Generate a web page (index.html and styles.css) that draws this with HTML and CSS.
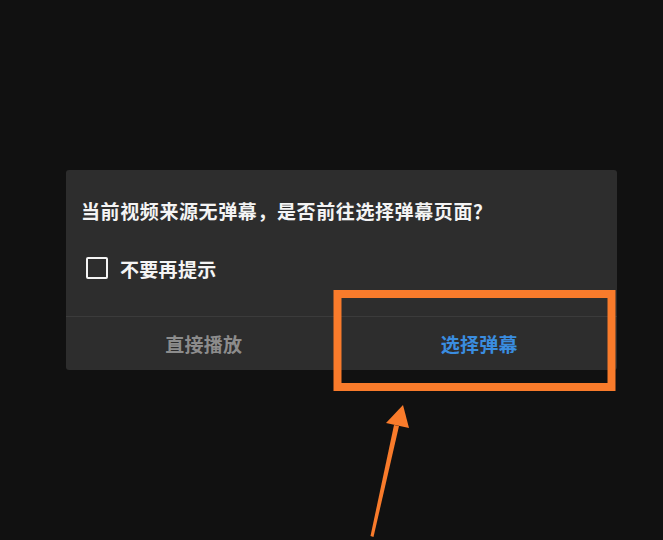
FILE: index.html
```html
<!DOCTYPE html>
<html lang="zh-CN">
<head>
<meta charset="utf-8">
<link rel="stylesheet" href="styles.css">
</head>
<body>
<div class="dialog">
  <div class="body">
    <div class="title">当前视频来源无弹幕，是否前往选择弹幕页面？</div>
    <label class="check-row">
      <span class="box"></span>
      <span class="check-label">不要再提示</span>
    </label>
  </div>
  <div class="footer">
    <div class="btn btn-neutral">直接播放</div>
    <div class="btn btn-primary">选择弹幕</div>
  </div>
</div>
<svg class="annot" width="663" height="540" viewBox="0 0 663 540">
  <rect x="337.5" y="294" width="274" height="93" fill="none" stroke="#f97b2b" stroke-width="8"/>
  <polygon points="370.5,536 373.5,537 399,426 394,425" fill="#f97b2b"/>
  <polygon points="403,405 386,423 409,428" fill="#f97b2b"/>
</svg>
</body>
</html>
```
FILE: styles.css
```css
html, body {
  margin: 0;
  padding: 0;
  background: #111111;
  width: 663px;
  height: 540px;
  overflow: hidden;
  font-family: "Noto Sans CJK SC", "Noto Sans", sans-serif;
}
.dialog {
  margin: 170px 0 0 66px;
  width: 551px;
  height: 200px;
  background: #2d2d2d;
  border-radius: 3px;
  display: flex;
  flex-direction: column;
}
.body {
  flex: 1;
  padding: 28px 15px 0 15px;
  display: flex;
  flex-direction: column;
}
.title {
  color: #f4f4f4;
  font-size: 19px;
  line-height: 26px;
  font-weight: 600;
  letter-spacing: 0.6px;
}
.check-row {
  margin-top: 31px;
  margin-left: 5px;
  display: flex;
  align-items: center;
  gap: 12px;
  height: 26px;
}
.box {
  width: 18px;
  height: 18px;
  border: 2.5px solid #f4f4f4;
  border-radius: 2px;
}
.check-label {
  color: #f4f4f4;
  font-size: 19px;
  line-height: 26px;
  font-weight: 600;
  letter-spacing: 0.3px;
  margin-top: 2px;
}
.footer {
  height: 53px;
  border-top: 1px solid #3b3b3b;
  display: flex;
}
.btn {
  flex: 1;
  display: flex;
  align-items: center;
  justify-content: center;
  font-size: 19px;
  font-weight: 600;
  letter-spacing: 0.3px;
}
.btn-neutral { color: #8c8c8c; }
.btn-primary { color: #3a8de0; }
.annot {
  position: absolute;
  left: 0;
  top: 0;
}
```
